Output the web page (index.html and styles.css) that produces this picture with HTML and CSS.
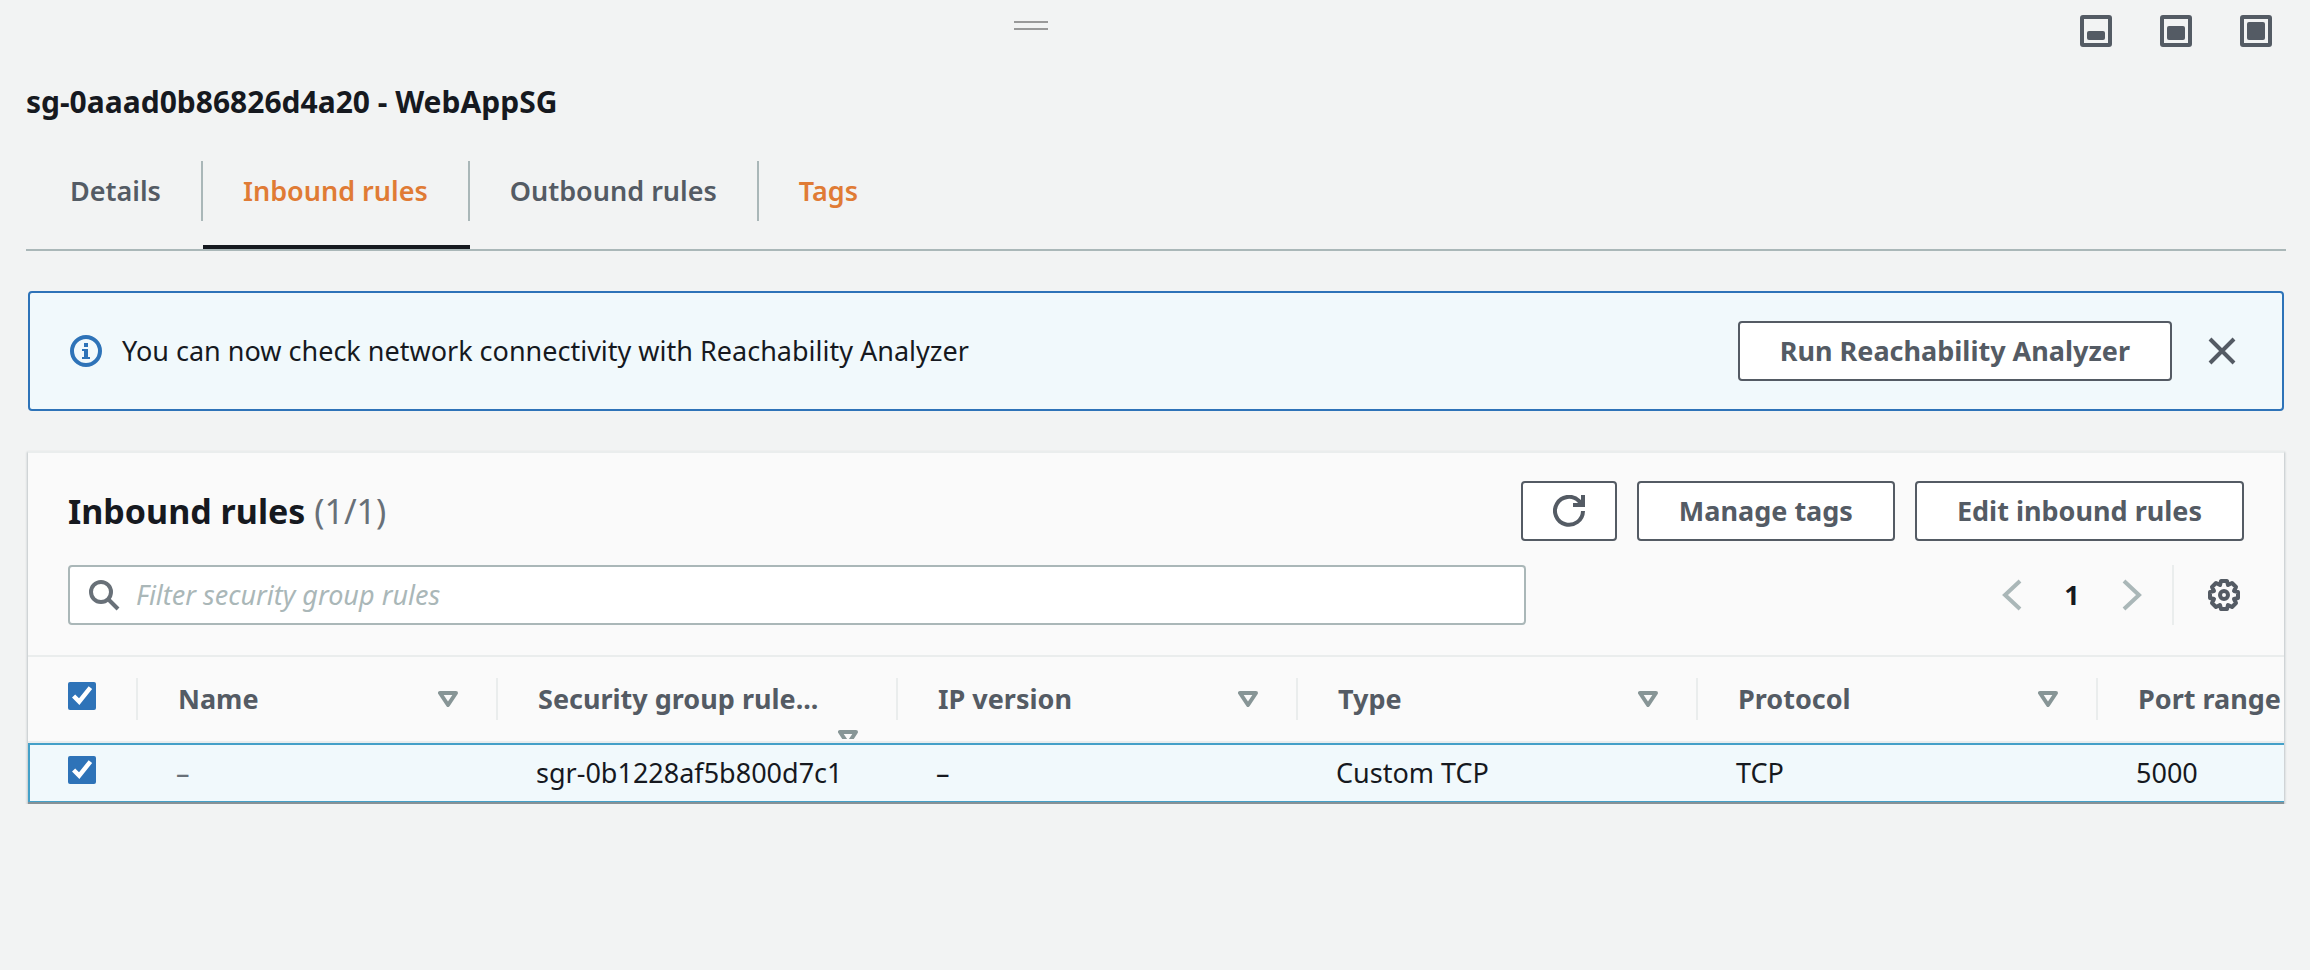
FILE: index.html
```html
<!DOCTYPE html>
<html lang="en">
<head>
<meta charset="utf-8">
<title>sg-0aaad0b86826d4a20 - WebAppSG</title>
<link rel="stylesheet" href="styles.css">
</head>
<body>
<header class="panel-bar">
  <div class="handle-area"><span class="handle"></span></div>
  <div class="panel-sizes">
    <button class="icon-button" type="button" aria-label="Small panel">
      <svg width="32" height="32" viewBox="0 0 32 32"><rect x="2" y="2" width="28" height="28" rx="1" fill="none" stroke="currentColor" stroke-width="4"/><rect x="7" y="16" width="18" height="9" rx="2" fill="currentColor"/></svg>
    </button>
    <button class="icon-button" type="button" aria-label="Medium panel">
      <svg width="32" height="32" viewBox="0 0 32 32"><rect x="2" y="2" width="28" height="28" rx="1" fill="none" stroke="currentColor" stroke-width="4"/><rect x="7" y="11" width="18" height="14" rx="2" fill="currentColor"/></svg>
    </button>
    <button class="icon-button" type="button" aria-label="Large panel">
      <svg width="32" height="32" viewBox="0 0 32 32"><rect x="2" y="2" width="28" height="28" rx="1" fill="none" stroke="currentColor" stroke-width="4"/><rect x="7" y="7" width="18" height="18" rx="2" fill="currentColor"/></svg>
    </button>
  </div>
</header>
<main class="panel">
  <h1 class="panel-title">sg-0aaad0b86826d4a20 - WebAppSG</h1>
  <nav class="tabs">
    <a class="tab" href="#details"><span class="tab-label">Details</span></a>
    <a class="tab tab-active" href="#inbound"><span class="tab-label">Inbound rules</span></a>
    <a class="tab" href="#outbound"><span class="tab-label">Outbound rules</span></a>
    <a class="tab tab-accent" href="#tags"><span class="tab-label">Tags</span></a>
  </nav>
  <section class="notice">
    <svg class="notice-icon" width="32" height="32" viewBox="0 0 32 32"><circle cx="16" cy="16" r="14" fill="none" stroke="currentColor" stroke-width="4"/><path d="M14 8h4v4h-4zM12 14h6v8h2v2h-8v-2h2v-6h-2z" fill="currentColor"/></svg>
    <p class="notice-text">You can now check network connectivity with Reachability Analyzer</p>
    <button class="button" type="button">Run Reachability Analyzer</button>
    <button class="icon-button notice-close" type="button" aria-label="Dismiss">
      <svg width="32" height="32" viewBox="0 0 32 32"><path d="M4 4l24 24M28 4L4 28" fill="none" stroke="currentColor" stroke-width="4"/></svg>
    </button>
  </section>
  <section class="card">
    <div class="card-head">
      <div class="card-row">
        <h2 class="card-title">Inbound rules <span class="count">(1/1)</span></h2>
        <div class="actions">
          <button class="button button-icon" type="button" aria-label="Refresh">
            <svg width="32" height="32" viewBox="0 0 32 32"><path d="M30 16A14 14 0 1 1 26 6l4 4" fill="none" stroke="currentColor" stroke-width="4"/><path d="M30 0v10H20" fill="none" stroke="currentColor" stroke-width="4"/></svg>
          </button>
          <button class="button" type="button">Manage tags</button>
          <button class="button" type="button">Edit inbound rules</button>
        </div>
      </div>
      <div class="card-row">
        <label class="search">
          <svg width="32" height="32" viewBox="0 0 32 32"><circle cx="13" cy="13" r="10" fill="none" stroke="currentColor" stroke-width="4"/><path d="M20 20l10 10" stroke="currentColor" stroke-width="4"/></svg>
          <input class="search-input" type="text" placeholder="Filter security group rules" aria-label="Filter security group rules">
        </label>
        <div class="pager">
          <button class="icon-button pager-arrow" type="button" aria-label="Previous page"><svg width="20" height="32" viewBox="0 0 20 32"><path d="M18 2L3 16l15 14" fill="none" stroke="currentColor" stroke-width="4"/></svg></button>
          <span class="page">1</span>
          <button class="icon-button pager-arrow" type="button" aria-label="Next page"><svg width="20" height="32" viewBox="0 0 20 32"><path d="M2 2l15 14L2 30" fill="none" stroke="currentColor" stroke-width="4"/></svg></button>
          <div class="settings">
            <button class="icon-button" type="button" aria-label="Preferences"><svg width="32" height="32" viewBox="0 0 32 32"><path d="M13 2h6l1 4 4-2 4 4-2 4 4 1v6l-4 1 2 4-4 4-4-2-1 4h-6l-1-4-4 2-4-4 2-4-4-1v-6l4-1-2-4 4-4 4 2z" fill="none" stroke="currentColor" stroke-width="4" stroke-linejoin="round"/><circle cx="16" cy="16" r="4" fill="none" stroke="currentColor" stroke-width="4"/></svg></button>
          </div>
        </div>
      </div>
    </div>
    <div class="table-wrap">
      <table class="rules">
        <colgroup><col class="col-check"><col class="col-name"><col><col><col><col><col></colgroup>
        <thead>
          <tr>
            <th class="check-cell"><input class="check" type="checkbox" aria-label="Select all rules" checked></th>
            <th><div class="head"><span>Name</span><svg class="sort" width="20" height="16" viewBox="0 0 20 16"><path d="M2 2h16l-8 12z" fill="none" stroke="currentColor" stroke-width="4" stroke-linejoin="round"/></svg></div></th>
            <th><div class="head head-wrapped"><span>Security group rule...</span><svg class="sort" width="20" height="16" viewBox="0 0 20 16" preserveAspectRatio="xMidYMin slice"><path d="M2 2h16l-8 12z" fill="none" stroke="currentColor" stroke-width="4" stroke-linejoin="round"/></svg></div></th>
            <th><div class="head"><span>IP version</span><svg class="sort" width="20" height="16" viewBox="0 0 20 16"><path d="M2 2h16l-8 12z" fill="none" stroke="currentColor" stroke-width="4" stroke-linejoin="round"/></svg></div></th>
            <th><div class="head"><span>Type</span><svg class="sort" width="20" height="16" viewBox="0 0 20 16"><path d="M2 2h16l-8 12z" fill="none" stroke="currentColor" stroke-width="4" stroke-linejoin="round"/></svg></div></th>
            <th><div class="head"><span>Protocol</span><svg class="sort" width="20" height="16" viewBox="0 0 20 16"><path d="M2 2h16l-8 12z" fill="none" stroke="currentColor" stroke-width="4" stroke-linejoin="round"/></svg></div></th>
            <th><div class="head"><span>Port range</span></div></th>
          </tr>
        </thead>
        <tbody>
          <tr>
            <td class="check-cell"><input class="check" type="checkbox" aria-label="Select rule sgr-0b1228af5b800d7c1" checked></td>
            <td class="muted">–</td>
            <td>sgr-0b1228af5b800d7c1</td>
            <td>–</td>
            <td>Custom TCP</td>
            <td>TCP</td>
            <td>5000</td>
          </tr>
        </tbody>
      </table>
    </div>
  </section>
</main>
</body>
</html>
```
FILE: styles.css
```css
* {
  box-sizing: border-box;
}

body {
  margin: 0;
  background: #f2f3f3;
  color: #16191f;
  font-family: "Noto Sans", "Open Sans", sans-serif;
  font-size: 27px;
  line-height: 36px;
}

svg {
  display: block;
}

.icon-button {
  padding: 0;
  border: 0;
  background: none;
  color: #545b64;
}

.panel-bar {
  display: flex;
  height: 62px;
}

.handle-area {
  display: flex;
  flex: 1;
  justify-content: center;
  padding-top: 21px;
}

.handle {
  width: 34px;
  height: 9px;
  border: solid #999;
  border-width: 2px 0;
}

.panel-sizes {
  display: flex;
  align-items: flex-start;
  gap: 48px;
  padding: 15px 38px 0 18px;
}

.panel {
  padding: 22px 24px 0 26px;
}

.panel-title {
  margin: 0;
  font-size: 30px;
  font-weight: 700;
  line-height: 36px;
}

.tabs {
  display: flex;
  margin-top: 41px;
  padding-left: 4px;
  border-bottom: 2px solid #aab7b8;
}

.tab {
  padding-bottom: 24px;
  border-bottom: 4px solid transparent;
  color: #545b64;
  font-weight: 600;
  text-decoration: none;
}

.tab-label {
  display: block;
  padding: 12px 40px;
  border-right: 2px solid #aab7b8;
}

.tab:last-child .tab-label {
  border-right: 0;
}

.tab-active,
.tab-accent {
  color: #e07b35;
}

.tab-active {
  border-bottom-color: #16191f;
}

.notice {
  display: flex;
  align-items: center;
  margin: 40px 2px 0;
  padding: 28px 44px 28px 40px;
  border: 2px solid #2e73b8;
  border-radius: 4px;
  background: #f1f9fc;
}

.notice-icon {
  color: #2e73b8;
}

.notice-text {
  flex: 1;
  margin: 0;
  padding-left: 20px;
}

.notice-close {
  margin-left: 34px;
}

.button {
  height: 60px;
  padding: 0 40px;
  border: 2px solid #545b64;
  border-radius: 4px;
  background: #fff;
  color: #545b64;
  font: inherit;
  font-weight: 700;
}

.button-icon {
  padding: 0 30px;
}

.card {
  margin: 40px 2px 0;
  border-top: 2px solid #eaeded;
  border-bottom: 2px solid #879196;
  background: #fafafa;
  box-shadow: 0 2px 2px 1px #c0c6c9;
}

.card-head {
  display: flex;
  flex-direction: column;
  gap: 24px;
  padding: 28px 40px 30px;
}

.card-row {
  display: flex;
  align-items: center;
  justify-content: space-between;
}

.card-title {
  margin: 0;
  font-size: 34px;
  font-weight: 700;
}

.count {
  color: #687078;
  font-weight: 400;
}

.actions {
  display: flex;
  gap: 20px;
}

.search {
  display: flex;
  align-items: center;
  gap: 16px;
  width: 67%;
  height: 60px;
  padding: 0 18px;
  border: 2px solid #aab7b8;
  border-radius: 4px;
  background: #fff;
  color: #687078;
}

.search-input {
  flex: 1;
  padding: 0;
  border: 0;
  outline: 0;
  background: none;
  color: #16191f;
  font: inherit;
}

.search-input::placeholder {
  color: #aab7b8;
  font-style: italic;
}

.pager {
  display: flex;
  align-items: center;
}

.pager-arrow {
  color: #aab7b8;
}

.page {
  width: 100px;
  font-weight: 700;
  text-align: center;
}

.settings {
  display: flex;
  align-items: center;
  height: 60px;
  margin-left: 30px;
  padding: 0 4px 0 34px;
  border-left: 2px solid #eaeded;
}

.table-wrap {
  overflow: hidden;
  border-top: 2px solid #eaeded;
}

.rules {
  width: 2468px;
  border-collapse: separate;
  border-spacing: 0;
  table-layout: fixed;
}

.col-check {
  width: 108px;
}

.col-name {
  width: 360px;
}

.rules th {
  height: 86px;
  padding: 0;
  border-bottom: 2px solid #eaeded;
  color: #545b64;
  font-weight: 700;
  text-align: left;
  white-space: nowrap;
}

.head {
  display: flex;
  align-items: center;
  justify-content: space-between;
  height: 42px;
  padding: 0 38px 0 40px;
  border-left: 2px solid #eaeded;
}

.head-wrapped {
  position: relative;
}

.sort {
  color: #879596;
}

.head-wrapped .sort {
  position: absolute;
  top: 52px;
  right: 38px;
  height: 9px;
}

.rules td {
  height: 59px;
  padding: 0 38px 0 40px;
  border-top: 2px solid #44a0c8;
  border-bottom: 1px solid #44a0c8;
  background: #f1f9fc;
}

.rules .check-cell {
  padding: 0 0 6px 40px;
}

.rules td.check-cell {
  padding-left: 38px;
  border-left: 2px solid #44a0c8;
}

.rules td.muted {
  color: #687078;
}

.check {
  display: block;
  width: 28px;
  height: 28px;
  margin: 0;
  accent-color: #2e73b8;
}
```
